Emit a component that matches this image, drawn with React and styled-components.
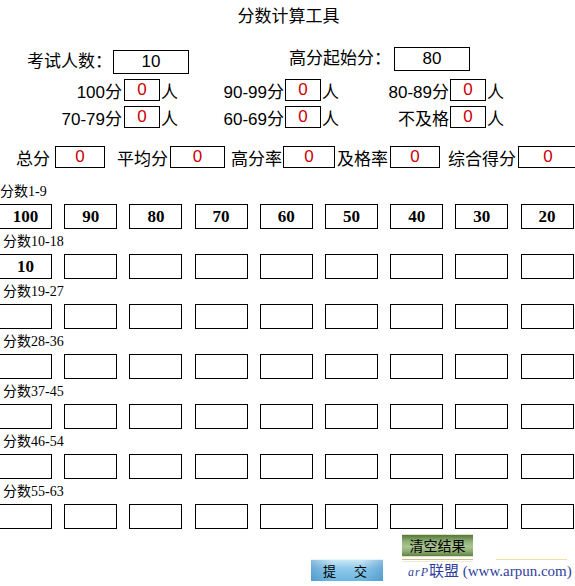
import React from "react";
import styled, { createGlobalStyle } from "styled-components";

// Global page reset
const Global = createGlobalStyle`
  html, body {
    margin: 0;
    background: #fff;
  }
  body {
    font-family: "Liberation Sans", "Noto Sans CJK SC", sans-serif;
    color: #000;
    overflow-x: hidden;
  }
`;

const Page = styled.div`
  width: 575px;
  overflow: hidden;
`;

const Title = styled.div`
  height: 34px;
  line-height: 34px;
  text-align: center;
  font-size: 17px;
  padding-left: 2px;
`;

// Top inputs: 考试人数 / 高分起始分
const SetupRow = styled.div`
  display: flex;
  align-items: flex-start;
  margin-top: 13px;
  height: 27px;
`;

const SetupLabel = styled.div`
  width: ${(p) => p.$w}px;
  text-align: right;
  font-size: 17px;
  line-height: 24px;
  margin-top: ${(p) => p.$top || 0}px;
  white-space: nowrap;
`;

const SetupBox = styled.div`
  width: 76px;
  height: 24px;
  box-sizing: border-box;
  border: 1px solid #000;
  text-align: center;
  font-size: 17px;
  line-height: 22px;
  margin-top: ${(p) => p.$top || 0}px;
  margin-left: ${(p) => p.$ml || 0}px;
`;

// Count rows: 100分 [0] 人 ...
const CountRow = styled.div`
  display: flex;
  height: 22px;
  margin-top: 5px;
`;

const CountGroup = styled.div`
  display: flex;
  align-items: center;
`;

const CountLabel = styled.div`
  width: ${(p) => p.$w}px;
  text-align: right;
  font-size: 17px;
  white-space: nowrap;
`;

const RedBox = styled.div`
  width: ${(p) => p.$w}px;
  height: 22px;
  flex-shrink: 0;
  box-sizing: border-box;
  border: 1px solid #000;
  margin-left: ${(p) => p.$ml}px;
  color: #cc0000;
  text-align: center;
  font-size: 17px;
  line-height: 20px;
`;

const Unit = styled.div`
  width: 17px;
  margin-left: 1px;
  font-size: 17px;
`;

// Summary row: 总分 平均分 ...
const SummaryRow = styled.div`
  display: flex;
  align-items: center;
  margin-top: 18px;
  height: 22px;
`;

const SumLabel = styled.div`
  width: ${(p) => p.$w}px;
  flex-shrink: 0;
  text-align: right;
  font-size: 17px;
  white-space: nowrap;
`;

// Score grid
const Scores = styled.div`
  margin-top: 11px;
`;

const BlockLabel = styled.div`
  height: 25px;
  line-height: 25px;
  padding-left: ${(p) => p.$pl}px;
  font-family: "Liberation Serif", "Noto Sans CJK SC", serif;
  font-size: 14px;
`;

const BoxRow = styled.div`
  display: flex;
  gap: 12.2px;
  margin-left: -1px;
`;

const ScoreBox = styled.div`
  width: 53px;
  height: 25px;
  flex-shrink: 0;
  box-sizing: border-box;
  border: 1px solid #000;
  text-align: center;
  font-family: "Liberation Serif", serif;
  font-weight: bold;
  font-size: 17px;
  line-height: 23px;
`;

// Bottom buttons
const ClearRow = styled.div`
  display: flex;
  margin-top: 5px;
  padding-left: 402px;
`;

const ClearButton = styled.div`
  width: 71px;
  height: 23px;
  box-sizing: border-box;
  border-top: 1px solid #e4dfbc;
  border-bottom: 1px solid #e4dfbc;
  background: linear-gradient(to bottom, #55773a 0%, #8fae75 30%, #aac692 55%, #8dab72 78%, #5f8243 100%);
  font-size: 14px;
  line-height: 21px;
  text-align: center;
  font-family: "Noto Sans CJK SC", sans-serif;
`;

const SubmitRow = styled.div`
  display: flex;
  margin-top: 2px;
  padding-left: 311px;
`;

const SubmitButton = styled.div`
  width: 72px;
  height: 22px;
  box-sizing: border-box;
  border-top: 1px solid #e6f3fb;
  background:
    linear-gradient(90deg, rgba(30, 110, 170, 0.35), rgba(30, 110, 170, 0) 30%, rgba(30, 110, 170, 0) 70%, rgba(30, 110, 170, 0.35)),
    linear-gradient(to bottom, #cbe7f8 0%, #8fcaeb 40%, #6cb6df 100%);
  display: flex;
  justify-content: space-between;
  padding: 0 16px 0 12px;
  font-size: 13px;
  line-height: 21px;
  font-family: "Noto Sans CJK SC", sans-serif;
`;

const Credit = styled.div`
  margin-left: 19px;
`;

const Lines = styled.div`
  display: flex;
  gap: 23px;
  height: 3px;
`;

const TanLine = styled.div`
  width: 71px;
  height: 1px;
  border-top: 1px solid #c9bd92;
  border-bottom: 1px solid #efe9cf;
`;

const YellowLine = styled.div`
  width: 71px;
  height: 1px;
  background: #f2e394;
`;

const CreditText = styled.div`
  padding-left: 6px;
  margin-top: 1px;
  color: #2f3f9e;
  font-family: "Liberation Serif", "Noto Sans CJK SC", serif;
  font-size: 15px;
  line-height: 16px;
  white-space: nowrap;
`;

const Brand = styled.span`
  font-style: italic;
  font-size: 12px;
  letter-spacing: 1px;
`;

const countRows = [
  [
    { label: "100分", w: 122, ml: 2 },
    { label: "90-99分", w: 106, ml: 1 },
    { label: "80-89分", w: 110, ml: 1 },
  ],
  [
    { label: "70-79分", w: 122, ml: 2 },
    { label: "60-69分", w: 106, ml: 1 },
    { label: "不及格", w: 110, ml: 1 },
  ],
];

const summary = [
  { label: "总分", w: 50, box: 50, ml: 5 },
  { label: "平均分", w: 63, box: 55, ml: 2 },
  { label: "高分率", w: 57, box: 52, ml: 1 },
  { label: "及格率", w: 53, box: 50, ml: 2 },
  { label: "综合得分", w: 76, box: 60, ml: 2 },
];

const blocks = [
  { label: "分数1-9", values: ["100", "90", "80", "70", "60", "50", "40", "30", "20"], pl: 0 },
  { label: "分数10-18", values: ["10"], pl: 3 },
  { label: "分数19-27", values: [], pl: 3 },
  { label: "分数28-36", values: [], pl: 3 },
  { label: "分数37-45", values: [], pl: 3 },
  { label: "分数46-54", values: [], pl: 3 },
  { label: "分数55-63", values: [], pl: 3 },
];

const App = () => {
  return (
    <Page>
      <Global />
      <Title>分数计算工具</Title>

      <SetupRow>
        <SetupLabel $w={112} $top={3}>考试人数：</SetupLabel>
        <SetupBox $top={3} $ml={1}>10</SetupBox>
        <SetupLabel $w={202}>高分起始分：</SetupLabel>
        <SetupBox $ml={3}>80</SetupBox>
      </SetupRow>

      {countRows.map((row, i) => (
        <CountRow key={i}>
          {row.map((g) => (
            <CountGroup key={g.label}>
              <CountLabel $w={g.w}>{g.label}</CountLabel>
              <RedBox $w={36} $ml={g.ml}>0</RedBox>
              <Unit>人</Unit>
            </CountGroup>
          ))}
        </CountRow>
      ))}

      <SummaryRow>
        {summary.map((s) => (
          <React.Fragment key={s.label}>
            <SumLabel $w={s.w}>{s.label}</SumLabel>
            <RedBox $w={s.box} $ml={s.ml}>0</RedBox>
          </React.Fragment>
        ))}
      </SummaryRow>

      <Scores>
        {blocks.map((b) => (
          <div key={b.label}>
            <BlockLabel $pl={b.pl}>{b.label}</BlockLabel>
            <BoxRow>
              {Array.from({ length: 9 }).map((_, i) => (
                <ScoreBox key={i}>{b.values[i] || ""}</ScoreBox>
              ))}
            </BoxRow>
          </div>
        ))}
      </Scores>

      <ClearRow>
        <ClearButton>清空结果</ClearButton>
      </ClearRow>
      <SubmitRow>
        <SubmitButton>
          <span>提</span>
          <span>交</span>
        </SubmitButton>
        <Credit>
          <Lines>
            <TanLine />
            <YellowLine />
          </Lines>
          <CreditText>
            <Brand>arP</Brand>联盟 (www.arpun.com)
          </CreditText>
        </Credit>
      </SubmitRow>
    </Page>
  );
};

export default App;
